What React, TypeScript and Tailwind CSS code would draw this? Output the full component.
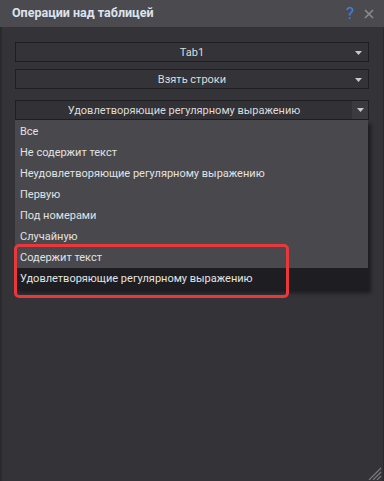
import React from "react";

const Arrow = () => (
  <svg width="7" height="4" viewBox="0 0 7 4" className="block">
    <path d="M0 0 H7 L3.5 4 Z" fill="#c8c8cc" />
  </svg>
);

const items = [
  "Все",
  "Не содержит текст",
  "Неудовлетворяющие регулярному выражению",
  "Первую",
  "Под номерами",
  "Случайную",
  "Содержит текст",
  "Удовлетворяющие регулярному выражению",
];

export default function App() {
  return (
    <div
      className="w-[384px] h-[481px] bg-[#333338] flex flex-col relative overflow-hidden text-[11px]"
      style={{ fontFamily: 'Roboto, "Noto Sans", sans-serif' }}
    >
      <div className="h-[27px] bg-[#4a4a4f] flex items-center pl-[12px] pr-[6px] shrink-0">
        <div className="flex-1 text-[12.5px] font-bold text-[#dde3ee]">Операции над таблицей</div>
        <div className="text-[#3f80ea] text-[17px] leading-none mr-[10px]">?</div>
        <svg width="10" height="10" viewBox="0 0 10 10" className="mr-[4px]">
          <path d="M1 1 L9 9 M9 1 L1 9" stroke="#8a8a90" strokeWidth="1.6" />
        </svg>
      </div>
      <div className="flex-1 border-l-2 border-r border-[#2a2a2e] flex flex-col pl-[13px] pr-[14px] pt-[15px]">
        <div className="h-[20px] border border-[#1f1f23] bg-[#333338] flex items-center relative pt-[2px]">
          <div className="flex-1 text-center text-[#dcdcdc]">Tab1</div>
          <div className="absolute right-[6px] top-[8px]"><Arrow /></div>
        </div>
        <div className="h-[20px] border border-[#1f1f23] bg-[#333338] flex items-center relative mt-[7px] pt-[2px]">
          <div className="flex-1 text-center text-[#dcdcdc]">Взять строки</div>
          <div className="absolute right-[6px] top-[8px]"><Arrow /></div>
        </div>
        <div className="h-[20px] border border-[#1f1f23] bg-[#313136] flex items-stretch mt-[11px]">
          <div className="flex-1 text-center text-[#dcdcdc] flex items-center justify-center pt-[2px]">
            Удовлетворяющие регулярному выражению
          </div>
          <div className="w-[16px] bg-[#3a3a3f] flex items-center justify-center">
            <Arrow />
          </div>
        </div>
        <div className="bg-[#48484d] flex flex-col pt-[1px] shadow-[3px_4px_4px_rgba(0,0,0,0.45)] mr-[1px]">
          {items.map((t, i) => (
            <div
              key={t}
              className={
                "h-[21px] flex items-center pl-[5px] pt-[2px] " +
                (i === items.length - 1 ? "bg-[#1e1e22] text-[#e4e4e4]" : "text-[#e2e2e2]")
              }
            >
              {t}
            </div>
          ))}
        </div>
      </div>
      <div className="absolute left-[14px] top-[244px] w-[275px] h-[54px] border-[3px] border-[#e8383b] rounded-[5px]" />
      <svg width="14" height="13" viewBox="0 0 14 13" className="absolute right-[2px] bottom-[1px]">
        <path d="M13 1 L1 13 M13 5 L5 13 M13 9 L9 13" stroke="#7a7a80" strokeWidth="1.2" />
      </svg>
    </div>
  );
}
